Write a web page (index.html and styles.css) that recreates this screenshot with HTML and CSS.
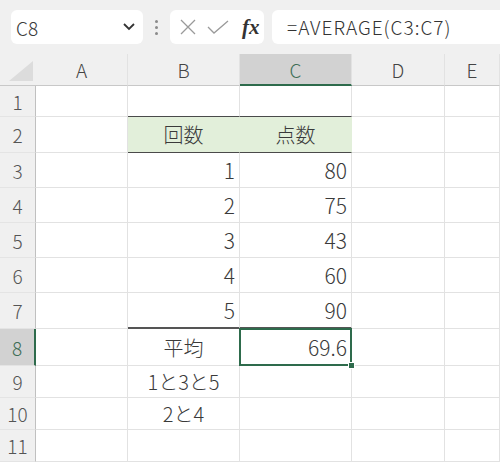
FILE: index.html
```html
<!DOCTYPE html>
<html lang="ja">
<head>
    <meta charset="UTF-8">
    <title>AVERAGE</title>
    <link rel="stylesheet" href="styles.css">
</head>
<body>
    <div class="toolbar">
        <div class="namebox">
            <span>C8</span>
            <svg class="chevron" width="14" height="10" viewBox="0 0 14 10"><polyline points="2,2 7,7 12,2" fill="none" stroke="#333" stroke-width="1.8"/></svg>
        </div>
        <div class="grip"><i></i><i></i><i></i></div>
        <div class="fbuttons">
            <svg width="18" height="18" viewBox="0 0 18 18"><path d="M2 2 L16 16 M16 2 L2 16" stroke="#9a9a9a" stroke-width="1.3" fill="none"/></svg>
            <svg width="24" height="18" viewBox="0 0 24 18"><path d="M2 9 L8 15 L22 3" stroke="#9a9a9a" stroke-width="1.3" fill="none"/></svg>
            <span class="fx">fx</span>
        </div>
        <div class="formula">=AVERAGE(C3:C7)</div>
    </div>

    <div class="sheet">
        <!-- 列見出し -->
        <div class="corner"><span class="tri"></span></div>
        <div class="colhead">A</div>
        <div class="colhead">B</div>
        <div class="colhead active">C</div>
        <div class="colhead">D</div>
        <div class="colhead">E</div>

        <div class="rowhead">1</div>
        <div class="cell"></div>
        <div class="cell top-line"></div>
        <div class="cell top-line"></div>
        <div class="cell"></div>
        <div class="cell"></div>

        <div class="rowhead">2</div>
        <div class="cell"></div>
        <div class="cell title">回数</div>
        <div class="cell title">点数</div>
        <div class="cell"></div>
        <div class="cell"></div>

        <div class="rowhead">3</div>
        <div class="cell"></div>
        <div class="cell num">1</div>
        <div class="cell num">80</div>
        <div class="cell"></div>
        <div class="cell"></div>

        <div class="rowhead">4</div>
        <div class="cell"></div>
        <div class="cell num">2</div>
        <div class="cell num">75</div>
        <div class="cell"></div>
        <div class="cell"></div>

        <div class="rowhead">5</div>
        <div class="cell"></div>
        <div class="cell num">3</div>
        <div class="cell num">43</div>
        <div class="cell"></div>
        <div class="cell"></div>

        <div class="rowhead">6</div>
        <div class="cell"></div>
        <div class="cell num">4</div>
        <div class="cell num">60</div>
        <div class="cell"></div>
        <div class="cell"></div>

        <div class="rowhead">7</div>
        <div class="cell"></div>
        <div class="cell num thick">5</div>
        <div class="cell num thick">90</div>
        <div class="cell"></div>
        <div class="cell"></div>

        <div class="rowhead active">8</div>
        <div class="cell"></div>
        <div class="cell center">平均</div>
        <div class="cell num selected">69.6<span class="handle"></span></div>
        <div class="cell"></div>
        <div class="cell"></div>

        <div class="rowhead">9</div>
        <div class="cell"></div>
        <div class="cell center">1と3と5</div>
        <div class="cell"></div>
        <div class="cell"></div>
        <div class="cell"></div>

        <div class="rowhead">10</div>
        <div class="cell"></div>
        <div class="cell center">2と4</div>
        <div class="cell"></div>
        <div class="cell"></div>
        <div class="cell"></div>

        <div class="rowhead">11</div>
        <div class="cell"></div>
        <div class="cell"></div>
        <div class="cell"></div>
        <div class="cell"></div>
        <div class="cell"></div>
    </div>
</body>
</html>
```

FILE: styles.css
```css
* {
    box-sizing: border-box;
}
body {
    margin: 0;
    width: 500px;
    height: 462px;
    overflow: hidden;
    background-color: #f0f0f0;
    font-family: "Noto Sans CJK JP", "Noto Sans", sans-serif;
    font-weight: 300;
    color: #3a3a3a;
}
.toolbar {
    display: flex;
    align-items: center;
    height: 54px;
    padding: 10px 0 10px 11px;
}
.namebox {
    display: flex;
    align-items: center;
    justify-content: space-between;
    width: 132px;
    height: 34px;
    padding: 0 7px 0 5px;
    background-color: #fff;
    border-radius: 6px;
    font-size: 19px;
}
.grip {
    display: flex;
    flex-direction: column;
    gap: 3px;
    margin: 0 12px 0 12px;
}
.grip i {
    width: 3px;
    height: 3px;
    border-radius: 50%;
    background-color: #8a8a8a;
}
.fbuttons {
    display: flex;
    align-items: center;
    gap: 9px;
    width: 94px;
    height: 34px;
    padding-left: 9px;
    background-color: #fff;
    border-radius: 6px;
}
.fx {
    font-family: "Liberation Serif", serif;
    font-style: italic;
    font-weight: bold;
    font-size: 21px;
    color: #333;
    margin-left: 3px;
}
.formula {
    flex: 1;
    height: 34px;
    margin-left: 8px;
    padding-left: 15px;
    line-height: 34px;
    background-color: #fff;
    border-radius: 6px 0 0 6px;
    font-size: 19px;
    letter-spacing: 1px;
    color: #333;
}
.sheet {
    display: grid;
    grid-template-columns: 36px 92px 112px 112px 93px 55px;
    grid-template-rows: 32px 31px 36px 35px 35px 35px 35px 36px 37px 32px 32px 32px;
    background-color: #fff;
}
.corner {
    position: relative;
    background-color: #f0f0f0;
    border-bottom: 1px solid #c8c8c8;
}
.tri {
    position: absolute;
    right: 3px;
    bottom: 4px;
    width: 0;
    height: 0;
    border-left: 24px solid transparent;
    border-bottom: 20px solid #dcdcdc;
}
.colhead {
    display: flex;
    align-items: center;
    justify-content: center;
    background-color: #f0f0f0;
    border-bottom: 1px solid #c8c8c8;
    border-right: 1px solid #e2e2e2;
    font-size: 19px;
    color: #444;
}
.colhead.active {
    background-color: #d2d2d2;
    border-bottom: 2px solid #2e6b4c;
    color: #3f6e56;
}
.rowhead {
    display: flex;
    align-items: center;
    justify-content: center;
    background-color: #f0f0f0;
    border-right: 1px solid #c0c0c0;
    border-bottom: 1px solid #e4e4e4;
    font-size: 19px;
    color: #555;
}
.rowhead.active {
    background-color: #d2d2d2;
    border-right: 2px solid #2e6b4c;
    color: #3f6e56;
}
.cell {
    display: flex;
    align-items: center;
    border-right: 1px solid #e2e2e2;
    border-bottom: 1px solid #e2e2e2;
    font-size: 20px;
    color: #3a3a3a;
}
.top-line {
    border-bottom: 1px solid #4a4a4a;
}
.title {
    justify-content: center;
    background-color: #e2efda;
    border-bottom: 1px solid #4a4a4a;
    border-right-color: #e2efda;
}
.num {
    justify-content: flex-end;
    padding-right: 4px;
    font-size: 21px;
}
.center {
    justify-content: center;
}
.thick {
    border-bottom: 2px solid #555;
}
.selected {
    position: relative;
}
.selected::after {
    content: "";
    position: absolute;
    top: -1px;
    left: -1px;
    right: -1px;
    bottom: -1px;
    border: 2px solid #2e6b4c;
}
.handle {
    position: absolute;
    right: -4px;
    bottom: -4px;
    width: 7px;
    height: 7px;
    background-color: #2e6b4c;
    border: 1px solid #fff;
    z-index: 1;
}
```
